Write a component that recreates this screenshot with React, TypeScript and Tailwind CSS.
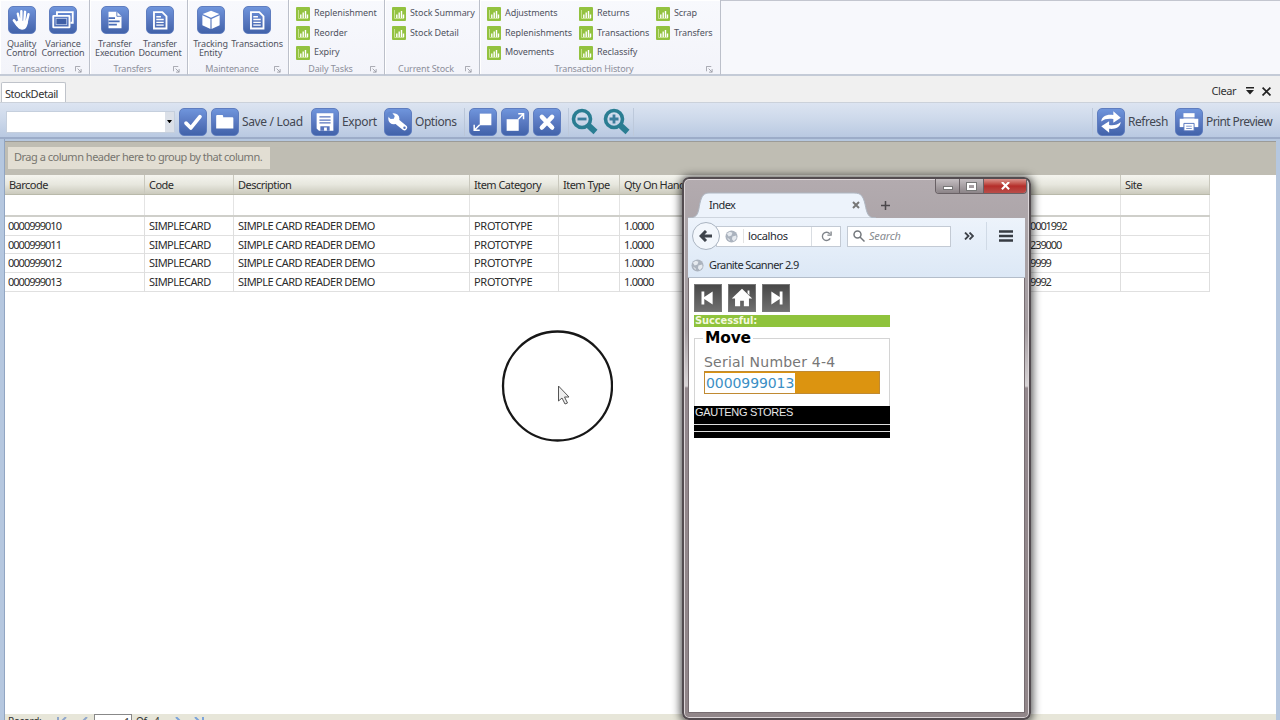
import type { ReactNode } from 'react';

type TileName = 'hand' | 'windows' | 'bars' | 'doc' | 'box' | 'check' | 'folder' | 'save' | 'wrench' | 'restore' | 'expand' | 'close' | 'refresh' | 'print';

const glyphs: Record<TileName, ReactNode> = {
  hand: (
    <g stroke="white" strokeLinecap="round" fill="none">
      <path d="M9.500 7.200l2 9M13.300 4.500v10M17.300 5.200l-.8 10M21 7.800l-2.200 9" strokeWidth="2.600" />
      <path d="M5.400 14.500l3.600 4.800" strokeWidth="3" />
      <path d="M9 15.500h10.900c-.5 5.200-2.500 8.300-5.800 8.300s-5.300-3-6.800-6z" fill="white" strokeWidth="1.200" />
    </g>
  ),
  windows: (
    <g fill="none" stroke="white" strokeWidth="2">
      <path d="M7.500 8.500V5.500h17v11.500H22" />
      <rect x="3.500" y="9.500" width="17.500" height="12.500" rx=".5" />
      <rect x="6.500" y="12.500" width="11.500" height="6.500" fill="#3f5fa6" stroke="#c3d0ea" strokeWidth=".8" />
    </g>
  ),
  bars: (
    <g>
      <path d="M7 5h9l5 5v13H7z" fill="white" />
      <path d="M16 5v5h5" fill="none" stroke="#5577bd" />
      <path d="M7 12h7M7 15.500h12M7 19h9" stroke="#4a6eb8" strokeWidth="1.800" />
    </g>
  ),
  doc: (
    <g fill="none" stroke="white" strokeWidth="2">
      <path d="M7.500 5.500h9l4.500 4.500v13.200h-13.500z" />
      <path d="M10 10.500h5M10 13.500h8M10 16.500h8M10 19.500h8" strokeWidth="1.500" />
    </g>
  ),
  box: (
    <g fill="white">
      <path d="M14 4l9 3.600-9 4-9-4z" />
      <path d="M4.700 9l8.700 3.800v11L4.700 19.600zM23.300 9l-8.700 3.800v11l8.700-4.200z" />
    </g>
  ),
  check: <path d="M6.500 15.200l5.200 5.200L21.500 8.200" fill="none" stroke="white" strokeWidth="4" strokeLinecap="round" strokeLinejoin="round" />,
  folder: <path d="M4.500 7.500q0-1 1-1h5.500q1 0 1 1v1.500H22q1 0 1 1V21H4.500z" fill="white" />,
  save: (
    <g>
      <path d="M5 4.500h18v19H7.500L5 21z" fill="white" />
      <path d="M8 8.500h12M8 12h12M8 15h12" stroke="#5875bd" strokeWidth="1.300" />
      <path d="M9 18.500h10V23.500h-3v-3.500h-3v3.500H9z" fill="#5875bd" />
    </g>
  ),
  wrench: (
    <g>
      <path d="M10 10.500l4.600 4.500 6.300 5" fill="none" stroke="white" strokeWidth="5.800" strokeLinecap="round" />
      <circle cx="9.500" cy="10.500" r="6" fill="white" />
      <path d="M2.700 4.300L6 2.500l4.500 5-1 3-3.500.2-4-4z" fill="#6389cf" />
      <circle cx="21" cy="20.200" r="1.300" fill="#5875bd" />
    </g>
  ),
  restore: (
    <g>
      <path d="M10.500 5H23v12.500H10.500z" fill="white" />
      <path d="M10.500 17L5 22.500M4.500 17v6h6" fill="none" stroke="white" strokeWidth="1.600" />
    </g>
  ),
  expand: (
    <g>
      <path d="M5 11h13v12.500H5z" fill="white" />
      <path d="M17.500 11l5.500-5.700M17.500 5h5.700v6" fill="none" stroke="white" strokeWidth="1.600" />
    </g>
  ),
  close: <path d="M8.500 8.500l11 11.500M19.500 8.500l-11 11.500" stroke="white" strokeWidth="4.800" strokeLinecap="round" />,
  refresh: (
    <g fill="white">
      <path d="M3.500 13.500c.5-5.500 5.500-8 13-7V2.500l8 6.800-8 5.500v-4c-5-.6-9.400-.4-13 2.700z" />
      <path d="M24.500 14c-.5 5.500-5.500 8-12.500 7.300V25.500L3.500 18.500l8.500-5.300v4c5 .6 9-.1 12.500-3.200z" />
    </g>
  ),
  print: (
    <g>
      <path d="M8 4.500h12v6H8z" fill="white" />
      <path d="M4 10.500h20v9H4z" fill="white" />
      <path d="M7.500 9.500h13" stroke="#6482c4" />
      <path d="M8.500 15.500h11v8h-11z" fill="white" stroke="#5273bc" />
      <path d="M11 18.500h6M11 21h6" stroke="#7790c8" />
    </g>
  ),
};

function Tile({ name }: { name: TileName }) {
  return (
    <span className="block size-7 shrink-0 rounded-[5px] border border-[#5f7dbf] bg-linear-to-b from-[#6f95dc] via-[#5a7ac2] to-[#4263aa]">
      <svg viewBox="0 0 28 28" className="size-[26px]">{glyphs[name]}</svg>
    </span>
  );
}

function BigButton({ icon, lines, width }: { icon: TileName; lines: string[]; width: string }) {
  return (
    <div className={`flex flex-col items-center ${width}`}>
      <Tile name={icon} />
      <div className="mt-[5px] text-center text-[9px] leading-[9px] tracking-[-0.130px] whitespace-nowrap text-[#50535f]">
        {lines.map((l) => <div key={l}>{l}</div>)}
      </div>
    </div>
  );
}

function Launcher() {
  return (
    <svg viewBox="0 0 8 8" className="mt-px size-[7px]" fill="none" stroke="#9a9ca5">
      <path d="M.5 6V.5H6M3 3l4 4M7 3.500V7H3.500" />
    </svg>
  );
}

function Group({ title, width, children, pad }: { title: string; width: string; children: ReactNode; pad: string }) {
  return (
    <section className={`flex h-[76px] shrink-0 flex-col border-r border-b-2 border-r-[#bcc0ca] border-b-[#c4cbd7] bg-linear-to-b from-[#f8f9fd] to-[#f3f4fa] shadow-[inset_1px_1px_0_#fff] ${width}`}>
      <div className={`flex h-[63px] pt-[6px] ${pad}`}>{children}</div>
      <div className="flex h-[11px] items-center text-[9px] leading-[11px] tracking-[-0.130px] whitespace-nowrap text-[#8d8f9a]">
        <span className="flex-1 pl-[2px] text-center">{title}</span>
        <span className="w-[14px]"><Launcher /></span>
      </div>
    </section>
  );
}

function Links({ items, width }: { items: string[]; width: string }) {
  return (
    <div className={`-mt-px flex shrink-0 flex-col ${width}`}>
      {items.map((t) => (
        <div key={t} className="flex h-[19.500px] shrink-0 items-start gap-[4px] text-[9px] leading-[15px] tracking-[-0.080px] whitespace-nowrap text-[#50535f]">
          <svg viewBox="0 0 14 14" className="mt-[1.500px] size-[14px] shrink-0">
            <rect width="14" height="14" rx="1" fill="#93c240" />
            <path d="M2.500 3v8.500H12" stroke="#c5e08f" fill="none" />
            <path d="M4.800 11V7.500M7.200 11V5.500M9.500 11V4M11.500 11V7.500" stroke="white" strokeWidth="1.400" />
          </svg>
          <span>{t}</span>
        </div>
      ))}
    </div>
  );
}

function Ribbon() {
  return (
    <div className="flex h-[76px] border-t border-b-2 border-t-[#c3c6cf] border-b-[#c4cbd7] bg-[#f7f8fc]">
      <div className="-mt-px flex">
        <Group title="Transactions" width="w-[90px]" pad="pl-[1px]">
          <BigButton icon="hand" lines={['Quality', 'Control']} width="w-[41px]" />
          <BigButton icon="windows" lines={['Variance', 'Correction']} width="w-[42px]" />
        </Group>
        <Group title="Transfers" width="w-[98px]" pad="pl-[2px]">
          <BigButton icon="bars" lines={['Transfer', 'Execution']} width="w-[46px]" />
          <BigButton icon="doc" lines={['Transfer', 'Document']} width="w-[44px]" />
        </Group>
        <Group title="Maintenance" width="w-[101px]" pad="pl-[2px]">
          <BigButton icon="box" lines={['Tracking', 'Entity']} width="w-[41px]" />
          <BigButton icon="doc" lines={['Transactions']} width="w-[52px]" />
        </Group>
        <Group title="Daily Tasks" width="w-[96px]" pad="pl-[7px]">
          <Links items={['Replenishment', 'Reorder', 'Expiry']} width="w-[85px]" />
        </Group>
        <Group title="Current Stock" width="w-[95px]" pad="pl-[7px]">
          <Links items={['Stock Summary', 'Stock Detail']} width="w-[85px]" />
        </Group>
        <Group title="Transaction History" width="w-[241px]" pad="pl-[7px]">
          <Links items={['Adjustments', 'Replenishments', 'Movements']} width="w-[92px]" />
          <Links items={['Returns', 'Transactions', 'Reclassify']} width="w-[77px]" />
          <Links items={['Scrap', 'Transfers']} width="w-[62px]" />
        </Group>
      </div>
    </div>
  );
}

function Magnifier({ plus }: { plus?: boolean }) {
  return (
    <svg viewBox="0 0 28 28" className="size-7 shrink-0" fill="none" stroke="#2a7d92">
      <circle cx="11" cy="11" r="8.500" strokeWidth="3.600" />
      <path d="M17.500 17.500l7 6.500" strokeWidth="5.800" />
      <path d={plus ? 'M6.500 11h9M11 6.500v9' : 'M6.500 11h9'} strokeWidth="2.800" stroke="#3c7d9c" />
    </svg>
  );
}

function Toolbar() {
  return (
    <div className="flex h-[36px] shrink-0 items-center border-b-2 border-[#9cacc8] bg-linear-to-b from-[#dce4f1] via-[#ccd8ea] to-[#b9c9e1] pt-[3px] pl-[6px] text-[12px] tracking-[-0.350px] whitespace-nowrap text-[#424752]">
      <div className="flex h-[22px] w-[169px] border border-[#c5cfdd] bg-white">
        <span className="flex-1" />
        <span className="flex w-[9px] items-center justify-center bg-[#dbe0e8]">
          <svg viewBox="0 0 6 4" className="w-[5px]"><path d="M0 0h6L3 4z" /></svg>
        </span>
      </div>
      <div className="ml-1 flex w-[124px] items-center gap-1">
        <Tile name="check" /><Tile name="folder" /><span className="ml-[-1px]">Save / Load</span>
      </div>
      <div className="ml-[8px] flex w-[73px] items-center gap-[3px]"><Tile name="save" /><span>Export</span></div>
      <div className="flex w-[80px] items-center gap-[3px]"><Tile name="wrench" /><span className="tracking-[-0.450px]">Options</span></div>
      <div className="flex w-[104px] items-center gap-1 border-l border-[#bac6d8] pl-1">
        <Tile name="restore" /><Tile name="expand" /><Tile name="close" />
      </div>
      <div className="flex items-center gap-1 border-x border-[#bdc9db] px-[2px]"><Magnifier /><Magnifier plus /></div>
      <div className="ml-auto flex items-center gap-[3px] border-l border-[#bdc9db] pl-1">
        <Tile name="refresh" /><span className="w-[44px] tracking-[-0.450px]">Refresh</span>
        <Tile name="print" /><span className="w-[74px] tracking-[-0.600px]">Print Preview</span>
      </div>
    </div>
  );
}

const cols = 'grid grid-cols-[140px_89px_236px_89px_61px_501px_89px]';
const titles = ['Barcode', 'Code', 'Description', 'Item Category', 'Item Type', 'Qty On Hand', 'Site'];
const rows = [
  ['0000999010', '0001992'],
  ['0000999011', '239000'],
  ['0000999012', '9999'],
  ['0000999013', '9992'],
];
const cellStyles = [
  'pl-[3px] tracking-[-1px]',
  'pl-[4px] tracking-[-0.550px]',
  'pl-[4px] tracking-[-0.550px]',
  'pl-[4px] tracking-[-0.300px]',
  '',
  'pl-[4px] tracking-[-0.800px]',
  '',
];

function Grid() {
  return (
    <div className="w-[1205px] text-[11px] whitespace-nowrap text-[#2c2c2c]">
      <div className={`${cols} h-[20px] border-b border-[#b9b9aa] bg-linear-to-b from-[#f5f5ef] via-[#e7e7de] to-[#cbcabd] leading-[20px] tracking-[-0.530px]`}>
        {titles.map((t) => <div key={t} className="overflow-hidden border-r border-[#c9c8bd] pl-[4px]">{t}</div>)}
      </div>
      <div className={`${cols} h-[22px] border-b-2 border-[#cfcfca]`}>
        {titles.map((t) => <div key={t} className="border-r border-[#e4e4e4]" />)}
      </div>
      {rows.map(([code, ref]) => (
        <div key={code} className={`${cols} h-[18.700px] border-b border-[#e0e0e0] leading-[18.700px]`}>
          {[code, 'SIMPLECARD', 'SIMPLE CARD READER DEMO', 'PROTOTYPE', '', '1.0000', ''].map((v, i) => (
            <div key={i} className={`flex border-r border-[#dedede] ${cellStyles[i]}`}>
              {v}
              {i === 5 && <span className="ml-auto w-[90px] tracking-[-1.100px]">{ref}</span>}
            </div>
          ))}
        </div>
      ))}
    </div>
  );
}

function Globe() {
  return (
    <svg viewBox="0 0 14 14" className="size-[13px] shrink-0">
      <circle cx="7" cy="7" r="6.500" fill="#abb3be" />
      <path d="M2 4l3-2 3 1-1 3-3 1zM8 7l4-1 .5 3-3 3-2-2zM2 8l3 2v2z" fill="#e6eaef" />
    </svg>
  );
}

function NavTile({ d }: { d: string }) {
  return (
    <span className="block size-[28px] border border-[#777] bg-linear-to-b from-[#484848] to-[#707070]">
      <svg viewBox="0 0 28 28" className="size-[26px]"><path d={d} fill="white" /></svg>
    </span>
  );
}

function ScannerWindow() {
  return (
    <div className="absolute top-[177px] left-[682px] flex h-[543px] w-[349px] flex-col overflow-hidden rounded-[7px] border-2 border-[#534c50] bg-[linear-gradient(180deg,#b3abaf_0,#aaa3a7_60px,#a59da1_150px,#d8d4d6_207px,#94898e_209px,#918689_100%)] px-[4px] pb-[5px] text-[11px] whitespace-nowrap text-[#262a30] shadow-[0_1px_9px_2px_rgba(0,0,0,0.65),inset_0_0_0_1px_#ddd6d9]">
      <div className="flex h-[39px] shrink-0 items-start">
        <div className="relative mt-[13px] -ml-1 flex h-[26px] w-[192px] items-center">
          <svg viewBox="0 0 192 26" className="absolute inset-0 size-full">
            <path d="M4 26C15 26 14 20 16 11C18 3 20 1 26 1H170C177 1 179 4 181 12C183 22 184 26 192 26Z" fill="#edf3fb" stroke="#aeb6c1" />
          </svg>
          <span className="relative ml-[25px] flex-1 tracking-[-0.550px]">Index</span>
          <svg viewBox="0 0 8 8" className="relative mr-[16px] size-[8px]"><path d="M1 1l6 6M7 1l-6 6" stroke="#777" strokeWidth="2" /></svg>
        </div>
        <svg viewBox="0 0 10 10" className="mt-[22px] ml-[5px] size-[9px]"><path d="M5 0v10M0 5h10" stroke="#4b484b" strokeWidth="1.700" /></svg>
        <div className="mr-[-2px] ml-auto flex h-[15px] w-[92px] overflow-hidden rounded-b-[4px] border border-t-0 border-[#696165] text-white">
          <span className="flex w-[24px] items-center justify-center border-r border-[#696165] bg-linear-to-b from-[#c4bec1] to-[#8c8488]"><i className="mt-1 h-[4px] w-[10px] border border-[#777] bg-white" /></span>
          <span className="flex w-[24px] items-center justify-center border-r border-[#696165] bg-linear-to-b from-[#c4bec1] to-[#8c8488]"><i className="h-[7px] w-[9px] border-2 border-white outline outline-[#777]" /></span>
          <span className="flex flex-1 items-center justify-center bg-linear-to-b from-[#d9938e] via-[#b52d2a] to-[#b94d49]"><svg viewBox="0 0 10 8" className="w-[9px]"><path d="M1 0l8 8M9 0L1 8" stroke="white" strokeWidth="2.300" /></svg></span>
        </div>
      </div>
      <div className="flex h-[60px] shrink-0 flex-col border-b border-[#b3bdca] bg-linear-to-b from-[#edf3fb] to-[#dce8f6]">
        <div className="flex h-[36px] items-center pl-[4px]">
          <span className="z-10 flex size-[28px] items-center justify-center rounded-full border border-[#aab4c1] bg-[#f3f7fc]">
            <svg viewBox="0 0 14 12" className="w-[14px]"><path d="M13 6H3M7 1L2 6l5 5" fill="none" stroke="#3f444c" strokeWidth="3" /></svg>
          </span>
          <div className="-ml-[4px] flex h-[21px] w-[125px] items-center border border-[#c3cad4] bg-white pl-[8px]">
            <Globe />
            <span className="ml-[5px] w-[68px] border-l border-[#e3e3e3] pl-[4px] leading-[14px] tracking-[-0.350px]">localhos</span>
            <span className="flex flex-1 justify-center border-l border-[#d9dde2] py-1">
              <svg viewBox="0 0 12 12" className="size-[11px]" fill="none" stroke="#80858b" strokeWidth="1.500"><path d="M9.500 3A4.500 4.500 0 1 0 10 8M7 4.500h4V.5" /></svg>
            </span>
          </div>
          <div className="ml-[6px] flex h-[21px] w-[104px] items-center gap-[4px] border border-[#c3cad4] bg-white pl-[5px] text-[#878b91] italic">
            <svg viewBox="0 0 12 12" className="size-[12px]" fill="none" stroke="#74787d" strokeWidth="1.500"><circle cx="4.500" cy="4.500" r="3.500" /><path d="M7 7l4.500 4.500" /></svg>
            <span className="tracking-[-0.200px]">Search</span>
          </div>
          <svg viewBox="0 0 10 8" className="ml-[13px] w-[10px]" fill="none" stroke="#3e434a" strokeWidth="1.800"><path d="M1 .5L4.500 4 1 7.500M5.500 .5L9 4 5.500 7.500" /></svg>
          <span className="ml-[12px] flex h-[28px] items-center border-l border-[#d0dae6] pl-[12px]">
            <svg viewBox="0 0 14 12" className="w-[14px]"><path d="M0 1.500h14M0 6h14M0 10.500h14" stroke="#373c43" strokeWidth="2.500" /></svg>
          </span>
        </div>
        <div className="flex h-[23px] items-center gap-[5px] pl-[3px]"><Globe /><span className="tracking-[-0.620px]">Granite Scanner 2.9</span></div>
      </div>
      <div className="min-h-0 flex-1 border-x border-b border-[#776d71] bg-white pt-[6px] pl-[5px]">
        <div className="w-[196px]">
          <div className="flex gap-[6px]">
            <NavTile d="M7 7h3v6l9-6v14l-9-6v6H7z" />
            <NavTile d="M14 4l11 10.500h-3.500v8.500h-5.500v-6h-4v6H6.500v-8.500H3L14 4zM20 6h2v5l-2-2z" />
            <NavTile d="M21 7h-3v6L9 7v14l9-6v6h3z" />
          </div>
          <div className="mt-[3px] h-[12px] overflow-hidden bg-[#8fc33c] pl-px font-['DejaVu_Sans_Condensed','DejaVu_Sans',sans-serif] text-[11px] leading-[12px] font-bold tracking-[-0.080px] text-[#f4f8df]">Successful:</div>
          <fieldset className="mt-[2px] h-[77px] border border-b-0 border-[#d4d4d4] px-[9px] font-['DejaVu_Sans',sans-serif]">
            <legend className="-ml-[1px] px-[2px] text-[15.500px] leading-[19px] font-bold tracking-[-0.200px] text-black">Move</legend>
            <div className="mt-[5px] text-[14px] leading-[18px] tracking-[0.220px] text-[#777]">Serial Number 4-4</div>
            <div className="flex h-[23px] w-[176px] items-center border border-[#c08a32] bg-[#dc9410] text-[14px] leading-[20px] text-[#3b8fc5]"><span className="bg-white px-px tracking-[-0.080px]">0000999013</span></div>
          </fieldset>
          <div className="h-[32px] bg-black font-['Liberation_Sans',sans-serif] text-[11px] leading-[13px] tracking-[-0.320px] text-[#e7e7e7]">
            <div className="h-[19px] border-b border-[#ddd] pl-px">GAUTENG STORES</div>
            <div className="h-[7px] border-b border-[#ddd]" />
          </div>
        </div>
      </div>
    </div>
  );
}

function StatusBar() {
  return (
    <div className="flex h-[6px] shrink-0 items-start overflow-hidden bg-[#e7e6d9] pl-[3px] text-[10px] leading-[14px] text-[#333]">
      <span className="w-[49px] tracking-[-0.300px]">Record:</span>
      <svg viewBox="0 0 32 8" className="mt-[3px] h-2 w-8 shrink-0" fill="none" stroke="#91a7cb" strokeWidth="2"><path d="M1 0v8M9 0L4 5M30 0l-5 5" /></svg>
      <span className="ml-[5px] h-4 w-[38px] shrink-0 border border-[#888] bg-white pr-[1px] text-right">1</span>
      <span className="ml-[4px] w-[39px] tracking-[-0.200px] whitespace-pre">Of   4</span>
      <svg viewBox="0 0 32 8" className="mt-[3px] h-2 w-8 shrink-0" fill="none" stroke="#7da4da" strokeWidth="2"><path d="M1 0l5 5M20 0l5 5M28 0v8" /></svg>
    </div>
  );
}

export default function App() {
  return (
    <div className="relative flex h-[720px] w-[1280px] flex-col overflow-hidden bg-[#f0f0f0] font-['Noto_Sans','Open_Sans',sans-serif]">
      <Ribbon />
      <div className="flex h-[27px] shrink-0 items-end border-b border-[#cbd1da] text-[11px] text-[#333]">
        <div className="ml-[1px] h-[20px] w-[65px] rounded-t-[2px] border border-b-0 border-[#bfc3ca] bg-white pl-[3px] leading-[21px] tracking-[-0.450px]">StockDetail</div>
        <div className="mr-[9px] mb-[3px] ml-auto flex items-center">
          <span className="mr-[10px] leading-[16px] tracking-[-0.450px]">Clear</span>
          <svg viewBox="0 0 8 8" className="mr-[8px] size-[8px]" fill="#222"><path d="M0 0h8v1.500H0zM0 3h8L4 7.500z" /></svg>
          <svg viewBox="0 0 8 8" className="size-[9px]" stroke="#222" strokeWidth="1.500"><path d="M.5 .5l7 7M7.500 .5l-7 7" /></svg>
        </div>
      </div>
      <div className="flex min-h-0 flex-1 flex-col bg-[#b5c7df]">
        <Toolbar />
        <div className="mr-[4px] ml-[4px] flex min-h-0 flex-1 flex-col border-l border-[#91a5c2] bg-white">
          <div className="h-[2px] shrink-0 bg-[#b5c7df]" />
          <div className="h-[34px] shrink-0 border-t border-[#9b9b98] bg-[#bfbdb3] pt-[5px] pl-[3px]">
            <div className="h-[22px] w-[262px] bg-[#e2ded3] pl-[6px] text-[11px] leading-[20px] tracking-[-0.490px] whitespace-nowrap text-[#77756f]">Drag a column header here to group by that column.</div>
          </div>
          <div className="min-h-0 flex-1 overflow-hidden"><Grid /></div>
          <StatusBar />
        </div>
      </div>
      <svg viewBox="0 0 112 112" className="absolute top-[330px] left-[501px] size-[112px]" fill="none">
        <circle cx="56.500" cy="56" r="54.500" stroke="#171717" strokeWidth="2.300" />
        <path d="M57.500 56v15l3.500-3 3 6 2.500-1-3-6h4.500z" fill="#eee" stroke="#555" />
      </svg>
      <ScannerWindow />
    </div>
  );
}
